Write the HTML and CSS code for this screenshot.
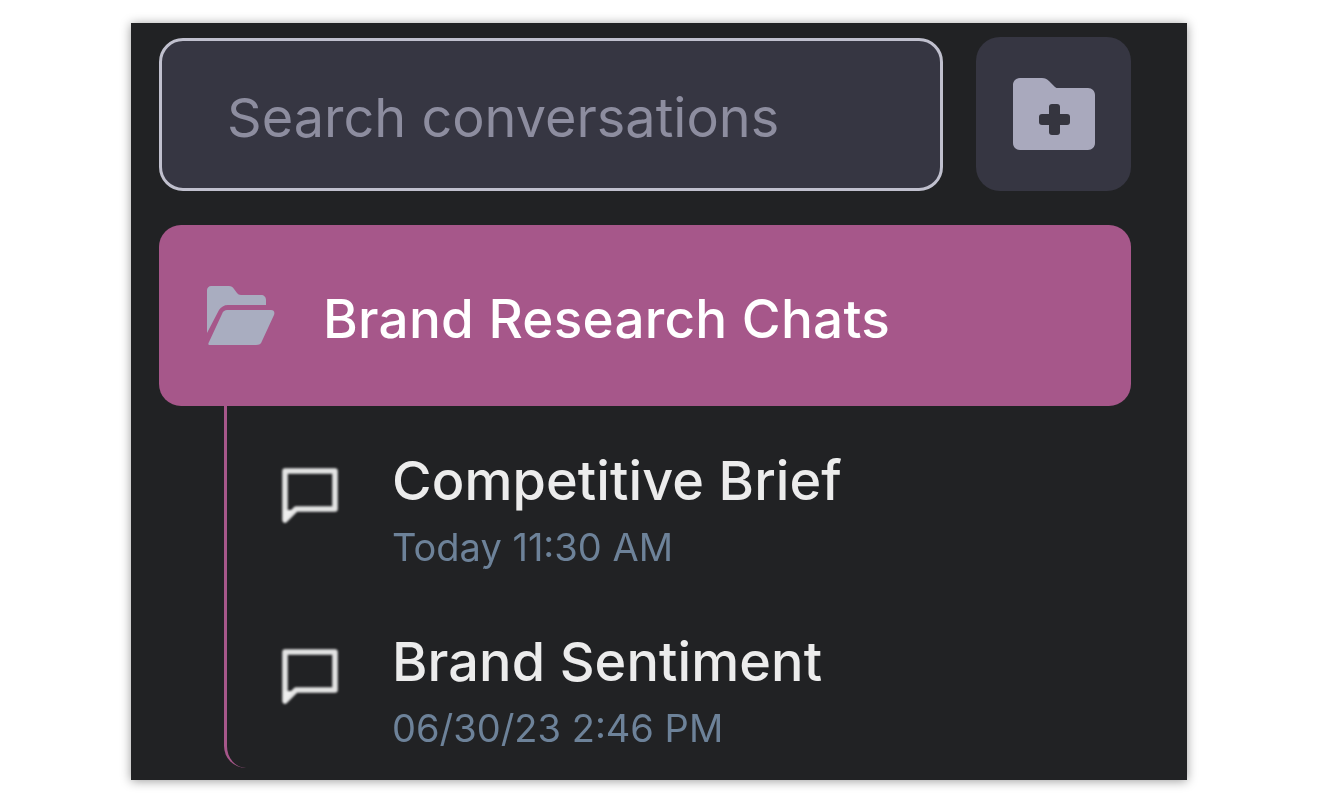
FILE: index.html
```html
<!DOCTYPE html>
<html lang="en">
<head>
<meta charset="utf-8">
<title>Conversations</title>
<link rel="stylesheet" href="styles.css">
</head>
<body>
<main class="panel">
  <div class="top">
    <div class="search"><span class="placeholder">Search conversations</span></div>
    <button class="new-folder" aria-label="New folder">
      <svg class="new-folder-icon" viewBox="0 0 84 74" width="84" height="74">
        <path fill="#a9a9bd" d="M8 1h22c3 0 5 1 7 3l6 6c1 1 2 1 3 1h30c4 0 7 3 7 7v48c0 4-3 7-7 7H8c-4 0-7-3-7-7V8c0-4 3-7 7-7z"/>
        <rect fill="#35353f" x="37" y="27" width="11" height="31" rx="3"/>
        <rect fill="#35353f" x="27" y="37" width="31" height="11" rx="3"/>
      </svg>
    </button>
  </div>
  <div class="folder">
    <svg class="folder-icon" viewBox="0 0 68 60" width="68" height="60">
      <path fill="#a9adc0" d="M4 0h18c2 0 4 1 5 3l3 4c1 1 2 2 4 2h20c3 0 5 2 5 5v5H21c-4 0-7 2-9 5L0 47V4c0-2 2-4 4-4z"/>
      <path fill="#a9adc0" d="M20 24h44c3 0 4 2 3 5L55 55c-1 3-3 4-6 4H3c-2 0-2-1-1-3l13-28c1-3 3-4 5-4z"/>
    </svg>
    <span class="folder-name">Brand Research Chats</span>
  </div>
  <div class="tree">
    <div class="chat">
      <svg class="chat-icon" viewBox="0 0 58 58" width="58" height="58">
        <path fill="none" stroke="#e4e4e4" stroke-width="5.5" stroke-linejoin="round" d="M4 3h50v38H15L4 52z"/>
        <path fill="#eee" d="M3 42h9l-8 12H2z"/>
      </svg>
      <div class="chat-text">
        <div class="chat-title">Competitive Brief</div>
        <div class="chat-time">Today 11:30 AM</div>
      </div>
    </div>
    <div class="chat">
      <svg class="chat-icon" viewBox="0 0 58 58" width="58" height="58">
        <path fill="none" stroke="#e4e4e4" stroke-width="5.5" stroke-linejoin="round" d="M4 3h50v38H15L4 52z"/>
        <path fill="#eee" d="M3 42h9l-8 12H2z"/>
      </svg>
      <div class="chat-text">
        <div class="chat-title">Brand Sentiment</div>
        <div class="chat-time">06/30/23 2:46 PM</div>
      </div>
    </div>
  </div>
</main>
</body>
</html>
```
FILE: styles.css
```css
html, body { margin: 0; padding: 0; background: #fff; }
body {
  width: 1317px;
  height: 802px;
  overflow: hidden;
  padding: 23px 0 0 131px;
  box-sizing: border-box;
  font-family: Inter, "Liberation Sans", sans-serif;
}
.panel {
  width: 1056px;
  height: 757px;
  background: #212224;
  box-shadow: 0 1px 10px rgba(0,0,0,.4);
  padding: 14px 56px 0 28px;
  box-sizing: border-box;
  filter: blur(.6px);
}
.top { display: flex; gap: 33px; height: 154px; }
.search {
  width: 784px;
  box-sizing: border-box;
  border: 3px solid #c0c0ce;
  border-radius: 24px;
  background: #363642;
  display: flex;
  align-items: center;
  padding: 6px 0 0 65px;
  margin-top: 1px;
}
.placeholder { font-size: 54px; color: #8d8d9f; line-height: 60px; }
.new-folder {
  width: 155px;
  border: 0;
  padding: 0;
  border-radius: 24px;
  background: #363642;
  display: flex;
  align-items: center;
  justify-content: center;
}
.new-folder-icon { display: block; }
.folder {
  margin-top: 34px;
  height: 181px;
  background: #a6578a;
  border-radius: 22px;
  display: flex;
  align-items: center;
  gap: 48px;
  padding-left: 48px;
}
.folder-icon { display: block; flex: none; }
.folder-name { font-size: 53px; font-weight: 500; line-height: 60px; letter-spacing: .25px; color: #fff; padding-top: 7px; }
.tree {
  margin-left: 65px;
  height: 362px;
  box-sizing: border-box;
  border-left: 3px solid #a6578a;
  border-bottom-left-radius: 22px;
  padding: 40px 0 0 54px;
  width: 700px;
}
.chat { display: flex; align-items: flex-start; gap: 53px; height: 181px; }
.chat-icon { display: block; flex: none; margin-top: 22px; filter: blur(.8px); }
.chat-text { display: flex; flex-direction: column; gap: 13px; padding-top: 5px; white-space: nowrap; }
.chat-title { font-size: 54px; font-weight: 500; line-height: 60px; letter-spacing: .1px; color: #ececec; }
.chat-time { font-size: 38px; line-height: 46px; color: #6d8299; }
```
